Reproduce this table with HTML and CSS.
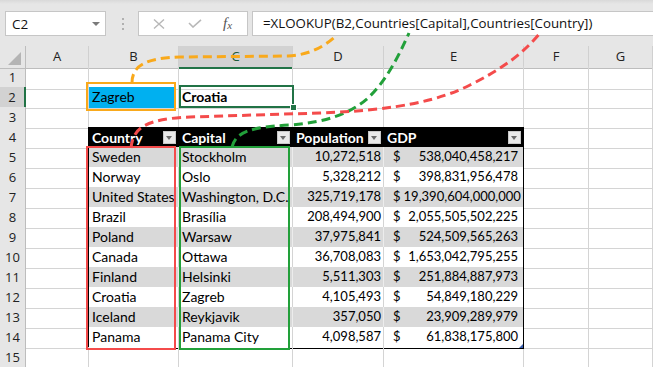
FILE: index.html
```html
<!DOCTYPE html>
<html>
<head>
<meta charset="utf-8">
<link rel="stylesheet" href="styles.css">
</head>
<body>
<div class="page">
  <div class="topbar">
    <div class="namebox"><span>C2</span><span class="caret"></span></div>
    <div class="grip"><i></i><i></i><i></i></div>
    <div class="fxbtns">
      <svg class="ic-x" width="12" height="10" viewBox="0 0 12 10"><path d="M1 0.5 L11 9.5 M11 0.5 L1 9.5" stroke="#b8b8b8" stroke-width="1.4" fill="none"/></svg>
      <svg class="ic-ok" width="14" height="9" viewBox="0 0 14 9"><path d="M1 4 L5 8 L13 0.8" stroke="#b8b8b8" stroke-width="1.6" fill="none"/></svg>
      <span class="fx">f<span class="fxs">x</span></span>
    </div>
    <div class="formula">=XLOOKUP(B2,Countries[Capital],Countries[Country])</div>
  </div>

  <div class="sheet">
    <div class="row colhead">
      <div class="corner"></div>
      <div class="ch">A</div><div class="ch">B</div><div class="ch sel">C</div><div class="ch">D</div><div class="ch">E</div><div class="ch">F</div><div class="ch">G</div>
    </div>
    <div class="row r1">
      <div class="rh">1</div><div class="c"></div><div class="c"></div><div class="c"></div><div class="c"></div><div class="c"></div><div class="c"></div><div class="c"></div>
    </div>
    <div class="row">
      <div class="rh sel">2</div><div class="c"></div><div class="c b2">Zagreb</div><div class="c bold">Croatia</div><div class="c"></div><div class="c"></div><div class="c"></div><div class="c"></div>
    </div>
    <div class="row">
      <div class="rh">3</div><div class="c"></div><div class="c"></div><div class="c"></div><div class="c"></div><div class="c"></div><div class="c"></div><div class="c"></div>
    </div>
    <div class="row">
      <div class="rh">4</div><div class="c edge"></div>
      <div class="c th"><span>Country</span><span class="dd"></span></div>
      <div class="c th"><span>Capital</span><span class="dd"></span></div>
      <div class="c th"><span>Population</span><span class="dd"></span></div>
      <div class="c th"><span>GDP</span><span class="dd"></span></div>
      <div class="c"></div><div class="c"></div>
    </div>
    <div class="row alt">
      <div class="rh">5</div><div class="c edge"></div><div class="c t">Sweden</div><div class="c t">Stockholm</div><div class="c t num">10,272,518</div><div class="c t gdp"><span>$</span><span>538,040,458,217</span></div><div class="c"></div><div class="c"></div>
    </div>
    <div class="row">
      <div class="rh">6</div><div class="c edge"></div><div class="c t">Norway</div><div class="c t">Oslo</div><div class="c t num">5,328,212</div><div class="c t gdp"><span>$</span><span>398,831,956,478</span></div><div class="c"></div><div class="c"></div>
    </div>
    <div class="row alt">
      <div class="rh">7</div><div class="c edge"></div><div class="c t">United States</div><div class="c t">Washington, D.C.</div><div class="c t num">325,719,178</div><div class="c t gdp"><span>$</span><span>19,390,604,000,000</span></div><div class="c"></div><div class="c"></div>
    </div>
    <div class="row">
      <div class="rh">8</div><div class="c edge"></div><div class="c t">Brazil</div><div class="c t">Brasília</div><div class="c t num">208,494,900</div><div class="c t gdp"><span>$</span><span>2,055,505,502,225</span></div><div class="c"></div><div class="c"></div>
    </div>
    <div class="row alt">
      <div class="rh">9</div><div class="c edge"></div><div class="c t">Poland</div><div class="c t">Warsaw</div><div class="c t num">37,975,841</div><div class="c t gdp"><span>$</span><span>524,509,565,263</span></div><div class="c"></div><div class="c"></div>
    </div>
    <div class="row">
      <div class="rh">10</div><div class="c edge"></div><div class="c t">Canada</div><div class="c t">Ottawa</div><div class="c t num">36,708,083</div><div class="c t gdp"><span>$</span><span>1,653,042,795,255</span></div><div class="c"></div><div class="c"></div>
    </div>
    <div class="row alt">
      <div class="rh">11</div><div class="c edge"></div><div class="c t">Finland</div><div class="c t">Helsinki</div><div class="c t num">5,511,303</div><div class="c t gdp"><span>$</span><span>251,884,887,973</span></div><div class="c"></div><div class="c"></div>
    </div>
    <div class="row">
      <div class="rh">12</div><div class="c edge"></div><div class="c t">Croatia</div><div class="c t">Zagreb</div><div class="c t num">4,105,493</div><div class="c t gdp"><span>$</span><span>54,849,180,229</span></div><div class="c"></div><div class="c"></div>
    </div>
    <div class="row alt">
      <div class="rh">13</div><div class="c edge"></div><div class="c t">Iceland</div><div class="c t">Reykjavik</div><div class="c t num">357,050</div><div class="c t gdp"><span>$</span><span>23,909,289,979</span></div><div class="c"></div><div class="c"></div>
    </div>
    <div class="row">
      <div class="rh">14</div><div class="c edge"></div><div class="c t">Panama</div><div class="c t">Panama City</div><div class="c t num">4,098,587</div><div class="c t gdp last"><span>$</span><span>61,838,175,800</span></div><div class="c"></div><div class="c"></div>
    </div>
    <div class="row">
      <div class="rh">15</div><div class="c"></div><div class="c"></div><div class="c"></div><div class="c"></div><div class="c"></div><div class="c"></div><div class="c"></div>
    </div>
  </div>

  <div class="box-orange"></div>
  <div class="sel-c2"><span class="handle"></span></div>
  <div class="box-red"></div>
  <div class="box-green"></div>

  <svg class="arrows" width="653" height="367" viewBox="0 0 653 367">
    <defs>
      <marker id="mo" markerUnits="userSpaceOnUse" markerWidth="10" markerHeight="10" viewBox="0 0 10 10" refX="9" refY="5" orient="auto"><path d="M0 0 L10 5 L0 10 z" fill="#f9a91b"/></marker>
      <marker id="mg" markerUnits="userSpaceOnUse" markerWidth="10" markerHeight="10" viewBox="0 0 10 10" refX="9" refY="5" orient="auto"><path d="M0 0 L10 5 L0 10 z" fill="#22a03a"/></marker>
      <marker id="mr" markerUnits="userSpaceOnUse" markerWidth="10" markerHeight="10" viewBox="0 0 10 10" refX="9" refY="5" orient="auto"><path d="M0 0 L10 5 L0 10 z" fill="#f44b4b"/></marker>
    </defs>
    <path d="M132,83 C132,66 145,58 180,57 L288,56 C306,55 322,49 337,35" stroke="#f9a91b" marker-end="url(#mo)"/>
    <path d="M232,147 C236,132 250,127 290,125 C330,122 352,112 368,98 C385,82 397,60 409,33" stroke="#22a03a" marker-end="url(#mg)"/>
    <path d="M131,148 C133,128 145,119 190,117 L320,113 C400,110 440,100 470,85 C500,70 522,55 540,33" stroke="#f44b4b" marker-end="url(#mr)"/>
  </svg>
</div>
</body>
</html>
```

FILE: styles.css
```css
html, body {
  margin: 0;
  padding: 0;
  background: #ffffff;
}
.page {
  position: relative;
  width: 653px;
  height: 367px;
  overflow: hidden;
  font-family: Lato, "Liberation Sans", sans-serif;
  color: #000;
}

/* ---------- formula bar ---------- */
.topbar {
  display: flex;
  align-items: flex-start;
  height: 46px;
  box-sizing: border-box;
  padding: 11px 0 0 5px;
  background: linear-gradient(#d9d9d9 0, #e6e6e6 4px, #e6e6e6 100%);
  font-family: "Open Sans", "Noto Sans", sans-serif;
}
.namebox {
  display: flex;
  align-items: center;
  justify-content: space-between;
  width: 101px;
  height: 25px;
  box-sizing: border-box;
  border: 1px solid #c6c6c6;
  background: #fff;
  padding: 0 5px 0 6px;
  font-size: 13.5px;
  color: #111;
}
.caret {
  width: 0;
  height: 0;
  border-left: 4px solid transparent;
  border-right: 4px solid transparent;
  border-top: 4px solid #7a7a7a;
}
.grip {
  display: flex;
  flex-direction: column;
  gap: 3px;
  margin: 7px 0 0 16px;
}
.grip i {
  display: block;
  width: 2px;
  height: 2px;
  background: #b0b0b0;
}
.fxbtns {
  display: flex;
  align-items: center;
  width: 110px;
  height: 25px;
  box-sizing: border-box;
  margin-left: 14px;
  border: 1px solid #c6c6c6;
  background: #fff;
  padding-left: 14px;
}
.ic-x { margin-right: 23px; }
.ic-ok { margin-right: 21px; }
.fx {
  font-family: "Liberation Serif", serif;
  font-style: italic;
  font-size: 15px;
  color: #555;
  line-height: 1;
}
.fxs {
  font-size: 11px;
  position: relative;
  top: 1px;
}
.formula {
  flex: 1;
  height: 25px;
  box-sizing: border-box;
  margin: 0 -2px 0 4px;
  border: 1px solid #c6c6c6;
  background: #fff;
  padding-left: 10px;
  font-size: 13.3px;
  line-height: 23px;
  color: #111;
  white-space: nowrap;
}

/* ---------- grid ---------- */
.row {
  display: grid;
  grid-template-columns: 26px 63px 90px 114px 91px 140px 65px 64px;
  height: 20px;
}
.row.r1 { height: 21px; }
.corner, .ch, .rh {
  box-sizing: border-box;
  background: #e6e6e6;
  font-family: "Open Sans", "Noto Sans", sans-serif;
  font-size: 13px;
  color: #222;
  text-align: center;
}
.corner {
  position: relative;
  border-right: 1px solid #bdbdbd;
  border-bottom: 1px solid #bdbdbd;
}
.corner::after {
  content: "";
  position: absolute;
  right: 4px;
  bottom: 3px;
  width: 0;
  height: 0;
  border-left: 13px solid transparent;
  border-bottom: 13px solid #b4b4b4;
}
.ch {
  border-right: 1px solid #d0d0d0;
  border-bottom: 1px solid #bdbdbd;
  line-height: 21px;
}
.ch.sel {
  background: #d2d2d2;
  border-bottom: 2px solid #217346;
  color: #1d5c38;
}
.rh {
  border-right: 1px solid #bdbdbd;
  border-bottom: 1px solid #d4d4d4;
  line-height: 21px;
}
.r1 .rh { line-height: 23px; }
.rh.sel {
  background: #d2d2d2;
  border-right: 2px solid #217346;
}

.c {
  box-sizing: border-box;
  border-right: 1px solid #d4d4d4;
  border-bottom: 1px solid #d4d4d4;
  padding: 0 3px;
  font-size: 14px;
  line-height: 19px;
  white-space: nowrap;
  overflow: hidden;
}
.bold { font-weight: 700; }
.b2 {
  background: linear-gradient(#00b0f0, #00b0f0) no-repeat 0 0 / 85px 100%;
}
.edge { border-right-color: #000; }

.th {
  display: flex;
  align-items: center;
  justify-content: space-between;
  background: #000;
  color: #fff;
  font-weight: 700;
  border-right-color: #000;
  border-bottom-color: #000;
  padding-right: 2px;
}
.dd {
  position: relative;
  flex: none;
  width: 13px;
  height: 13px;
  box-sizing: border-box;
  background: #e9e9e9;
  border: 1px solid #c8c8c8;
}
.dd::after {
  content: "";
  position: absolute;
  left: 2px;
  top: 4px;
  border-left: 3.5px solid transparent;
  border-right: 3.5px solid transparent;
  border-top: 4px solid #6b6b6b;
}

.t {
  border-bottom: 1px solid #000;
  background: #fff;
}
.alt .t {
  background: #d9d9d9;
  border-right-color: #ececec;
}
.num {
  text-align: right;
  padding-right: 2px;
  font-size: 13px;
}
.gdp {
  display: flex;
  justify-content: space-between;
  gap: 3px;
  padding: 0 5px 0 9px;
  font-size: 13px;
  border-right-color: #000 !important;
  position: relative;
  overflow: visible;
}
.gdp.last::after {
  content: "";
  position: absolute;
  right: 0;
  bottom: 0;
  border-left: 4px solid transparent;
  border-bottom: 4px solid #3a5fb0;
}

/* ---------- overlays ---------- */
.box-orange, .sel-c2, .box-red, .box-green {
  position: absolute;
  box-sizing: border-box;
  pointer-events: none;
}
.box-orange {
  left: 86px;
  top: 82px;
  width: 90px;
  height: 29px;
  border: 2px solid #f9a91b;
}
.sel-c2 {
  left: 179px;
  top: 85px;
  width: 115px;
  height: 23px;
  border: 2px solid #217346;
}
.handle {
  position: absolute;
  right: -5px;
  bottom: -5px;
  width: 7px;
  height: 7px;
  box-sizing: border-box;
  background: #217346;
  border: 1px solid #fff;
}
.box-red {
  left: 86px;
  top: 146px;
  width: 90px;
  height: 204px;
  border: 2px solid #f44b4b;
}
.box-green {
  left: 179px;
  top: 146px;
  width: 111px;
  height: 204px;
  border: 2px solid #22a03a;
}
.arrows {
  position: absolute;
  left: 0;
  top: 0;
  pointer-events: none;
}
.arrows path {
  fill: none;
  stroke-width: 3;
  stroke-dasharray: 9 5;
}
.arrows marker path {
  stroke: none;
  stroke-dasharray: none;
}
```
